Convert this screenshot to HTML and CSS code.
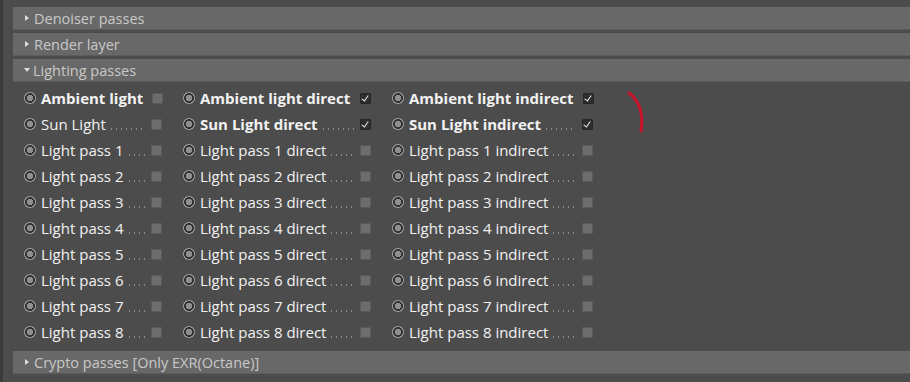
FILE: index.html
```html
<!DOCTYPE html>
<html lang="en">
<head>
  <meta charset="UTF-8" />
  <title>Render passes</title>
  <link rel="stylesheet" href="styles.css">
</head>
<body>
  <div class="panel">
    <div class="group-head"><span class="tri"></span>Denoiser passes</div>
    <div class="group-head"><span class="tri"></span>Render layer</div>
    <div class="group-head"><span class="tri open"></span>Lighting passes</div>

    <div class="pass-grid">
      <div class="pass"><span class="radio"></span><span class="label bold">Ambient light</span><span class="leader"></span><span class="check"></span></div>
      <div class="pass"><span class="radio"></span><span class="label bold">Ambient light direct</span><span class="leader"></span><span class="check on"></span></div>
      <div class="pass"><span class="radio"></span><span class="label bold">Ambient light indirect</span><span class="leader"></span><span class="check on"></span></div>

      <div class="pass"><span class="radio"></span><span class="label">Sun Light</span><span class="leader"></span><span class="check"></span></div>
      <div class="pass"><span class="radio"></span><span class="label bold">Sun Light direct</span><span class="leader"></span><span class="check on"></span></div>
      <div class="pass"><span class="radio"></span><span class="label bold">Sun Light indirect</span><span class="leader"></span><span class="check on"></span></div>

      <div class="pass"><span class="radio"></span><span class="label">Light pass 1</span><span class="leader"></span><span class="check"></span></div>
      <div class="pass"><span class="radio"></span><span class="label">Light pass 1 direct</span><span class="leader"></span><span class="check"></span></div>
      <div class="pass"><span class="radio"></span><span class="label">Light pass 1 indirect</span><span class="leader"></span><span class="check"></span></div>

      <div class="pass"><span class="radio"></span><span class="label">Light pass 2</span><span class="leader"></span><span class="check"></span></div>
      <div class="pass"><span class="radio"></span><span class="label">Light pass 2 direct</span><span class="leader"></span><span class="check"></span></div>
      <div class="pass"><span class="radio"></span><span class="label">Light pass 2 indirect</span><span class="leader"></span><span class="check"></span></div>

      <div class="pass"><span class="radio"></span><span class="label">Light pass 3</span><span class="leader"></span><span class="check"></span></div>
      <div class="pass"><span class="radio"></span><span class="label">Light pass 3 direct</span><span class="leader"></span><span class="check"></span></div>
      <div class="pass"><span class="radio"></span><span class="label">Light pass 3 indirect</span><span class="leader"></span><span class="check"></span></div>

      <div class="pass"><span class="radio"></span><span class="label">Light pass 4</span><span class="leader"></span><span class="check"></span></div>
      <div class="pass"><span class="radio"></span><span class="label">Light pass 4 direct</span><span class="leader"></span><span class="check"></span></div>
      <div class="pass"><span class="radio"></span><span class="label">Light pass 4 indirect</span><span class="leader"></span><span class="check"></span></div>

      <div class="pass"><span class="radio"></span><span class="label">Light pass 5</span><span class="leader"></span><span class="check"></span></div>
      <div class="pass"><span class="radio"></span><span class="label">Light pass 5 direct</span><span class="leader"></span><span class="check"></span></div>
      <div class="pass"><span class="radio"></span><span class="label">Light pass 5 indirect</span><span class="leader"></span><span class="check"></span></div>

      <div class="pass"><span class="radio"></span><span class="label">Light pass 6</span><span class="leader"></span><span class="check"></span></div>
      <div class="pass"><span class="radio"></span><span class="label">Light pass 6 direct</span><span class="leader"></span><span class="check"></span></div>
      <div class="pass"><span class="radio"></span><span class="label">Light pass 6 indirect</span><span class="leader"></span><span class="check"></span></div>

      <div class="pass"><span class="radio"></span><span class="label">Light pass 7</span><span class="leader"></span><span class="check"></span></div>
      <div class="pass"><span class="radio"></span><span class="label">Light pass 7 direct</span><span class="leader"></span><span class="check"></span></div>
      <div class="pass"><span class="radio"></span><span class="label">Light pass 7 indirect</span><span class="leader"></span><span class="check"></span></div>

      <div class="pass"><span class="radio"></span><span class="label">Light pass 8</span><span class="leader"></span><span class="check"></span></div>
      <div class="pass"><span class="radio"></span><span class="label">Light pass 8 direct</span><span class="leader"></span><span class="check"></span></div>
      <div class="pass"><span class="radio"></span><span class="label">Light pass 8 indirect</span><span class="leader"></span><span class="check"></span></div>
    </div>

    <div class="group-head"><span class="tri"></span>Crypto passes [Only EXR(Octane)]</div>

    <!-- red annotation mark drawn over the panel -->
    <svg class="mark" width="30" height="50" viewBox="0 0 30 50">
      <path d="M4 4 Q20 16 16 42" fill="none" stroke="#c8142a" stroke-width="3" stroke-linecap="round"/>
    </svg>
  </div>
</body>
</html>
```

FILE: styles.css
```css
html, body {
  margin: 0;
  height: 100%;
  background: #4c4c4c;
}

body {
  font-family: "Open Sans", "Noto Sans", sans-serif;
  font-size: 14px;
}

.panel {
  position: relative;
  height: 100%;
  border-left: 3px solid #3b3b3b;
  padding: 7px 0 0 10px;
  box-sizing: border-box;
}

.group-head {
  display: flex;
  align-items: center;
  height: 23px;
  margin-bottom: 3px;
  padding-left: 12px;
  background: #686868;
  border-bottom: 1px solid #5c5c5c;
  box-sizing: border-box;
  color: #c8c8c8;
  font-size: 14.5px;
}

.tri {
  width: 0;
  height: 0;
  margin-right: 5px;
  border-top: 3.5px solid transparent;
  border-bottom: 3.5px solid transparent;
  border-left: 4px solid #dedede;
}

.tri.open {
  margin-left: -1px;
  margin-right: 3px;
  border-left: 3.5px solid transparent;
  border-right: 3.5px solid transparent;
  border-top: 4px solid #dedede;
  border-bottom: 0;
}

.pass-grid {
  display: grid;
  grid-template-columns: 138px 188px 201px;
  grid-auto-rows: 26px;
  column-gap: 21px;
  padding: 0 0 6px 11px;
}

.pass {
  display: flex;
  align-items: center;
  color: #f2f2f2;
}

.radio {
  flex: none;
  width: 12px;
  height: 12px;
  margin-right: 5px;
  border-radius: 50%;
  background: radial-gradient(circle, #8e8e8e 0 3px, #2c2c2c 3.6px 4.6px, #a2a2a2 5.2px);
}

.label {
  white-space: nowrap;
  font-size: 15px;
}

.label.bold {
  font-weight: 700;
}

.leader {
  flex: 1;
  align-self: center;
  height: 2px;
  margin: 10px 6px 0 3px;
  background: radial-gradient(circle, #8c8c8c 0.7px, transparent 1px) left center / 5px 2px repeat-x;
}

.check {
  flex: none;
  position: relative;
  width: 11px;
  height: 11px;
  border-radius: 2px;
  background: #6d6d6d;
  box-shadow: inset 0 0 0 1px #5a5a5a;
}

.check.on {
  background: #2e2e2e;
  box-shadow: inset 0 0 0 1px #262626;
}

.check.on::after {
  content: "";
  position: absolute;
  left: 3px;
  top: 1px;
  width: 3px;
  height: 6px;
  border-right: 1.6px solid #f0f0f0;
  border-bottom: 1.6px solid #f0f0f0;
  transform: rotate(35deg);
}

.mark {
  position: absolute;
  left: 622px;
  top: 89px;
}
```
